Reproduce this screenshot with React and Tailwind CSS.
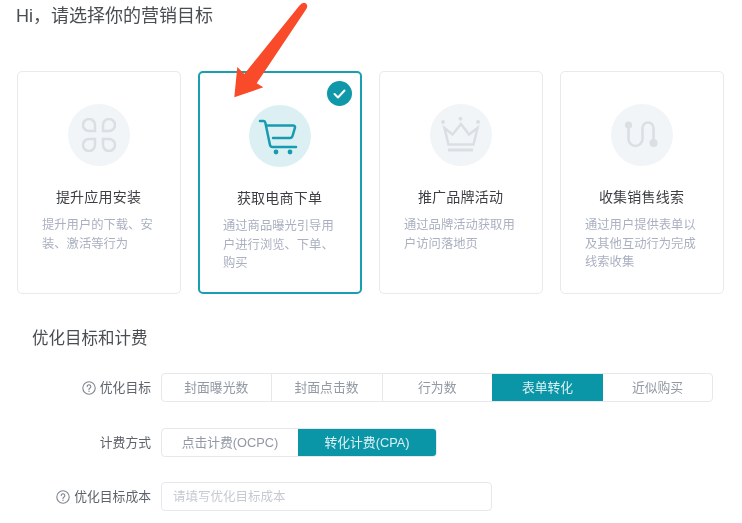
const FONT = "font-['Liberation_Sans','Noto_Sans_CJK_SC',sans-serif]";

function Clover() {
  return (
    <svg width="34" height="34" viewBox="0 0 34 34" fill="none" stroke="#dbdfe3" strokeWidth="2.500">
      <path d="M13 13H7a6 6 0 1 1 6-6Z" />
      <path d="M21 13h6a6 6 0 1 0-6-6Z" />
      <path d="M13 21H7a6 6 0 1 0 6 6Z" />
      <path d="M21 21h6a6 6 0 1 1-6 6Z" />
    </svg>
  );
}

function Cart() {
  return (
    <svg width="62" height="62" viewBox="0 0 62 62" fill="none" stroke="#169bb0" strokeWidth="2.500" strokeLinejoin="round" strokeLinecap="round">
      <path d="M11 16h3.500c1 0 1.500.5 1.800 1.500L21 40c.3 1.300 1 2 2.500 2H47" />
      <path d="M18 20.500h26c1.500 0 2.300.8 2 2.200L43.500 31c-.4 1.300-1 2-2.500 2H24" />
      <circle cx="27" cy="47" r="2.400" fill="#169bb0" stroke="none" />
      <circle cx="41" cy="47" r="2.400" fill="#169bb0" stroke="none" />
    </svg>
  );
}

function Crown() {
  return (
    <svg width="62" height="62" viewBox="0 0 62 62" fill="none" stroke="#dbdfe3" strokeWidth="2.500">
      <path d="M14.500 24l8 6.500L31 20l8 10.500 8.500-6.500-4 16.500h-25Z" strokeLinejoin="miter" />
      <path d="M18 46h25" strokeWidth="3" />
      <circle cx="13" cy="18" r="2" fill="#dbdfe3" stroke="none" />
      <circle cx="30.500" cy="14.800" r="2" fill="#dbdfe3" stroke="none" />
      <circle cx="48" cy="18" r="2" fill="#dbdfe3" stroke="none" />
    </svg>
  );
}

function Route() {
  return (
    <svg width="62" height="62" viewBox="0 0 62 62" fill="none" stroke="#dbdfe3" strokeWidth="2.600">
      <path d="M17.500 21v14a7 7 0 0 0 14 0V24a5.500 5.500 0 0 1 11 0v15" />
      <circle cx="17.500" cy="21" r="3.600" fill="#dbdfe3" stroke="none" />
      <circle cx="42.500" cy="39" r="4" fill="#dbdfe3" stroke="none" />
    </svg>
  );
}

function Help() {
  return (
    <svg width="14" height="14" viewBox="0 0 14 14" fill="none" stroke="#7f858f" strokeWidth="1.100" className="shrink-0">
      <circle cx="7" cy="7" r="6.200" />
      <path d="M5.200 5.600a1.800 1.800 0 1 1 2.800 1.500c-.7.4-1 .8-1 1.400" strokeLinecap="round" />
      <circle cx="7" cy="10.300" r=".7" fill="#7f858f" stroke="none" />
    </svg>
  );
}

function Card({ icon, title, desc, active }) {
  return (
    <div
      className={
        active
          ? "relative w-[164px] h-[223px] rounded-[5px] border-2 border-[#1a9fb0] bg-white flex flex-col items-center pt-[32px]"
          : "relative w-[164px] h-[223px] rounded-[5px] border border-[#e8eaee] bg-white flex flex-col items-center pt-[32px]"
      }
    >
      <div
        className={
          active
            ? "w-[62px] h-[62px] rounded-full bg-[#dcf0f4] flex items-center justify-center"
            : "w-[62px] h-[62px] rounded-full bg-[#f1f5f8] flex items-center justify-center"
        }
      >
        {icon}
      </div>
      <div className="mt-[21px] text-[14px] leading-[20px] text-[#3c3f44] tracking-[0.2px]">{title}</div>
      <div className="mt-[9px] w-[113px] text-[12.300px] leading-[18.500px] text-[#aab0c0]">{desc}</div>
      {active && (
        <div className="absolute right-[8px] top-[8px] w-[25px] h-[25px] rounded-full bg-[#0f98aa] flex items-center justify-center">
          <svg width="13" height="10" viewBox="0 0 13 10" fill="none" stroke="#fff" strokeWidth="2" strokeLinecap="round" strokeLinejoin="round">
            <path d="M1.500 5l3.500 3.500 6.500-7" />
          </svg>
        </div>
      )}
    </div>
  );
}

function Segments({ items }) {
  return (
    <div className="flex h-[29px] rounded-[4px] border border-[#e6e8ec] overflow-hidden bg-white">
      {items.map((it, i) => (
        <div
          key={it.label}
          className={
            it.active
              ? `${it.w} flex items-center justify-center bg-[#0b96a8] text-white/85 text-[12.800px]`
              : `${it.w} flex items-center justify-center text-[#9298a4] text-[12.800px] ${i < items.length - 1 && !items[i + 1].active ? "border-r border-[#e6e8ec]" : ""}`
          }
        >
          {it.label}
        </div>
      ))}
    </div>
  );
}

function Row({ label, help, children, className }) {
  return (
    <div className={`flex items-center ${className}`}>
      <div className="w-[151px] flex items-center justify-end gap-[4px] text-[12.800px] text-[#5e636b] shrink-0">
        {help && <Help />}
        <span>{label}</span>
      </div>
      <div className="ml-[10px]">{children}</div>
    </div>
  );
}

export default function App() {
  return (
    <div className={`relative w-[742px] h-[523px] overflow-hidden bg-white ${FONT} blur-[0.5px]`}>
      <h1 className="pl-[16px] pt-[4px] text-[18px] leading-[24px] font-normal text-[#4a4d52]">Hi，请选择你的营销目标</h1>

      <div className="mt-[43px] pl-[16.500px] flex gap-[17px]">
        <Card icon={<Clover />} title="提升应用安装" desc="提升用户的下载、安装、激活等行为" />
        <Card active icon={<Cart />} title="获取电商下单" desc="通过商品曝光引导用户进行浏览、下单、购买" />
        <Card icon={<Crown />} title="推广品牌活动" desc="通过品牌活动获取用户访问落地页" />
        <Card icon={<Route />} title="收集销售线索" desc="通过用户提供表单以及其他互动行为完成线索收集" />
      </div>

      <h2 className="mt-[32px] pl-[32px] text-[16.500px] leading-[24px] font-normal text-[#4a4d52]">优化目标和计费</h2>

      <Row label="优化目标" help className="mt-[23px]">
        <Segments
          items={[
            { label: "封面曝光数", w: "w-[109.500px]" },
            { label: "封面点击数", w: "w-[111px]" },
            { label: "行为数", w: "w-[109.500px]" },
            { label: "表单转化", active: true, w: "w-[111px]" },
            { label: "近似购买", w: "w-[109px]" },
          ]}
        />
      </Row>

      <Row label="计费方式" className="mt-[26px]">
        <Segments
          items={[
            { label: "点击计费(OCPC)", w: "w-[136px]" },
            { label: "转化计费(CPA)", active: true, w: "w-[138px]" },
          ]}
        />
      </Row>

      <Row label="优化目标成本" help className="mt-[25px]">
        <div className="w-[331px] h-[29px] rounded-[4px] border border-[#e6e8ec] flex items-center pl-[11px] pt-[1px] text-[12.500px] text-[#c6cad2]">
          请填写优化目标成本
        </div>
      </Row>

      <svg className="absolute left-[225px] top-0" width="90" height="105" viewBox="0 0 90 105">
        <path d="M74.500 5.500Q78 1.500 81 3.500Q83.500 6 81 9.500L31.700 83.300L38.300 87.300L9.300 97.300L12.300 67L19.300 74Z" fill="#f94a2a" />
      </svg>
    </div>
  );
}
